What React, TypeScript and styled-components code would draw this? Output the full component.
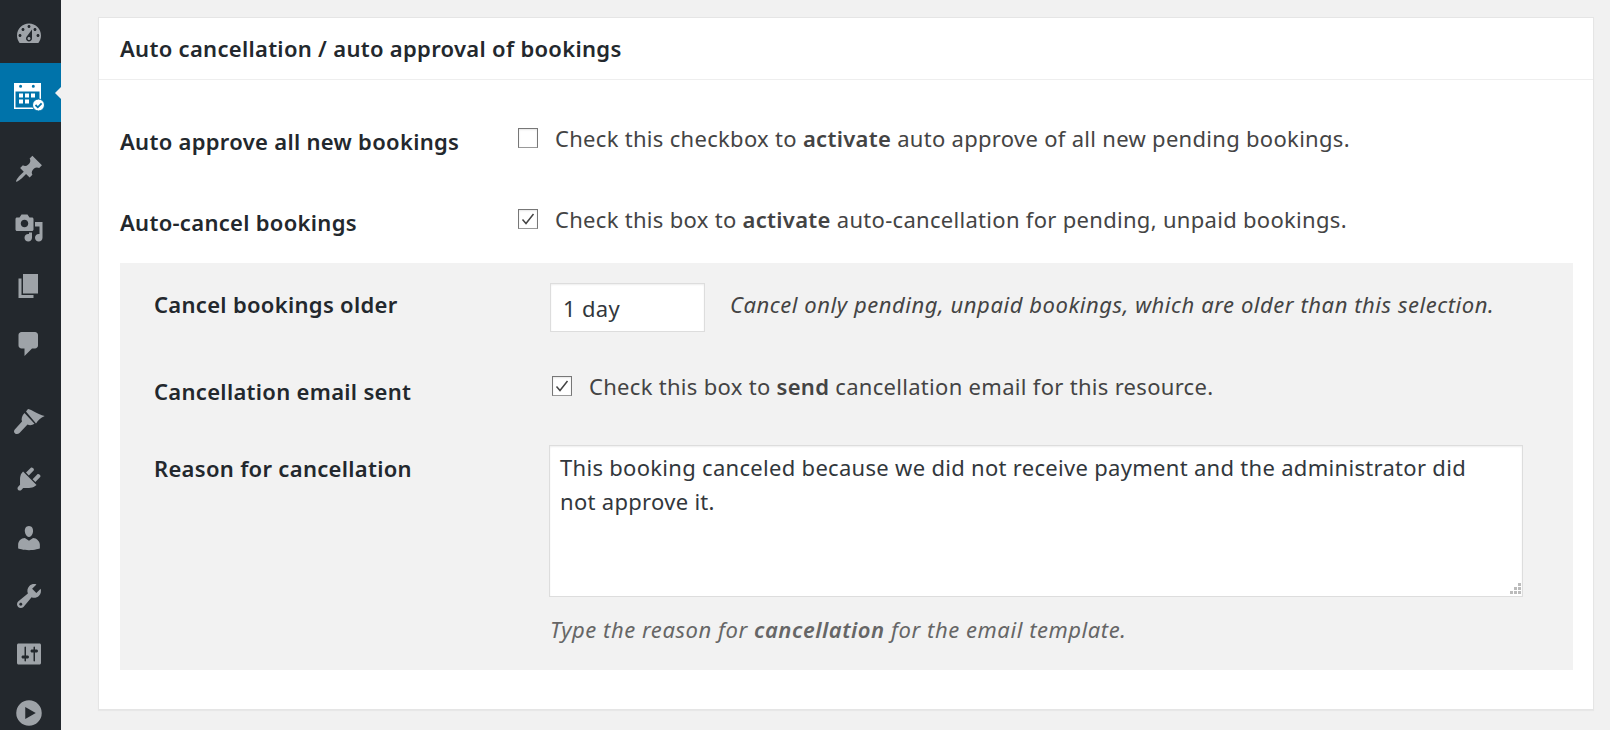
import React from "react";
import styled, { createGlobalStyle } from "styled-components";

const GlobalStyle = createGlobalStyle`
  html, body {
    margin: 0;
    padding: 0;
    height: 100%;
    overflow: hidden;
    background: #f1f1f1;
    font-family: "Noto Sans", "Open Sans", sans-serif;
    letter-spacing: 0.3px;
  }
`;

const Page = styled.div`
  display: flex;
  height: 730px;
  overflow: hidden;
`;

const Sidebar = styled.nav`
  width: 61px;
  flex: none;
  background: #23282d;
  padding-top: 4px;
  overflow: hidden;
`;

const MenuItem = styled.div<{ $active?: boolean; $gap?: boolean; $first?: boolean }>`
  position: relative;
  height: ${(p) => (p.$active || p.$first ? "59px" : "58.4px")};
  margin-top: ${(p) => (p.$gap ? "18px" : "0")};
  padding-right: 3px;
  box-sizing: border-box;
  display: flex;
  align-items: center;
  justify-content: center;
  color: ${(p) => (p.$active ? "#fff" : "#9ea3a8")};
  background: ${(p) => (p.$active ? "#0073aa" : "transparent")};

  svg {
    width: 30px;
    height: 30px;
    fill: currentColor;
    overflow: visible;
  }
`;

const ActiveArrow = styled.span`
  position: absolute;
  right: 0;
  top: 50%;
  margin-top: -6px;
  border: 6px solid transparent;
  border-left-width: 0;
  border-right-color: #f1f1f1;
`;

const Content = styled.main`
  flex: 1;
  padding: 17px 16px 0 37px;
`;

const Card = styled.section`
  height: 693px;
  box-sizing: border-box;
  background: #fff;
  border: 1px solid #e5e5e5;
  box-shadow: 0 1px 1px rgba(0, 0, 0, 0.04);
`;

const CardTitle = styled.h2`
  margin: 0;
  height: 62px;
  box-sizing: border-box;
  padding: 0 21px 2px;
  display: flex;
  align-items: center;
  border-bottom: 1px solid #eee;
  font-size: 22px;
  font-weight: 600;
  color: #23282d;
`;

const CardBody = styled.div`
  padding: 32px 20px 0 21px;
`;

const Row = styled.div<{ $height: number; $labelWidth: number }>`
  display: grid;
  grid-template-columns: ${(p) => p.$labelWidth}px 1fr;
  height: ${(p) => p.$height}px;
  align-items: start;
`;

const Label = styled.div<{ $top: number }>`
  font-size: 22px;
  line-height: 30px;
  font-weight: 600;
  color: #23282d;
  padding-top: ${(p) => p.$top}px;
`;

const CheckLine = styled.div<{ $top: number; $indent?: number }>`
  display: flex;
  align-items: center;
  gap: 17px;
  padding-top: ${(p) => p.$top}px;
  padding-left: ${(p) => p.$indent ?? 0}px;
  font-size: 22px;
  line-height: 30px;
  color: #444;

  b {
    font-weight: 600;
  }
`;

const CheckBox = styled.span`
  width: 20px;
  height: 20px;
  flex: none;
  box-sizing: border-box;
  border: 1px solid #777;
  border-bottom-color: #999;
  background: #fff;
  box-shadow: inset 0 1px 2px rgba(0, 0, 0, 0.1);
  display: flex;
  align-items: center;
  justify-content: center;

  svg {
    width: 14px;
    height: 14px;
  }
`;

const Panel = styled.div`
  height: 407px;
  box-sizing: border-box;
  background: #f2f2f2;
  padding: 20px 34px 0;
`;

const SelectLine = styled.div`
  display: flex;
  align-items: center;
  gap: 25px;
`;

const SelectBox = styled.div`
  width: 155px;
  height: 49px;
  box-sizing: border-box;
  background: #fff;
  border: 1px solid #ddd;
  box-shadow: inset 0 1px 2px rgba(0, 0, 0, 0.07);
  padding: 0 12px;
  display: flex;
  align-items: center;
  font-size: 22px;
  color: #32373c;
`;

const Hint = styled.div`
  font-size: 22px;
  font-style: italic;
  color: #444;
  line-height: 30px;
  letter-spacing: 0.55px;
  white-space: nowrap;

  b {
    font-weight: 600;
  }
`;

const SelectHint = styled(Hint)`
  margin-bottom: 8px;
`;

const AreaWrap = styled.div`
  position: relative;
  width: 974px;
  margin-left: -1px;
`;

const ReasonArea = styled.textarea`
  display: block;
  width: 100%;
  height: 152px;
  box-sizing: border-box;
  margin: 0;
  padding: 4px 40px 4px 10px;
  border: 1px solid #ddd;
  box-shadow: inset 0 1px 2px rgba(0, 0, 0, 0.07);
  outline: none;
  resize: none;
  font-family: inherit;
  font-size: 22px;
  letter-spacing: 0.3px;
  line-height: 34px;
  color: #32373c;
  background: #fff;
`;

const ResizeDots = styled.svg`
  position: absolute;
  right: 2px;
  bottom: 2px;
  width: 12px;
  height: 12px;
  fill: #bbb;
`;

const ReasonHint = styled(Hint)`
  margin-top: 17px;
  color: #666;
`;

const Tick = () => (
  <svg viewBox="0 0 14 14" fill="none" stroke="#444" strokeWidth="1.5">
    <path d="M1.5 7.5l3.5 4 7.5-9.5" />
  </svg>
);

const dashboardPath =
  "M3.76 16h12.48c1.1-1.37 1.76-3.11 1.76-5 0-4.42-3.58-8-8-8s-8 3.58-8 8c0 1.89.66 3.63 1.76 5zM10 4c.55 0 1 .45 1 1s-.45 1-1 1-1-.45-1-1 .45-1 1-1zM6 6c.55 0 1 .45 1 1s-.45 1-1 1-1-.45-1-1 .45-1 1-1zm8 0c.55 0 1 .45 1 1s-.45 1-1 1-1-.45-1-1 .45-1 1-1zm-5.37 5.55L12 7v6c0 1.1-.9 2-2 2s-2-.9-2-2c0-.57.24-1.08.63-1.45zM4 10c.55 0 1 .45 1 1s-.45 1-1 1-1-.45-1-1 .45-1 1-1zm12 0c.55 0 1 .45 1 1s-.45 1-1 1-1-.45-1-1 .45-1 1-1zm-5 3c0-.55-.45-1-1-1s-1 .45-1 1 .45 1 1 1 1-.45 1-1z";

const upperIcons = [
  "M10.44 3.02l1.82-1.82 6.36 6.35-1.83 1.82c-1.05-.68-2.48-.57-3.41.36l-.75.75c-.92.93-1.04 2.35-.35 3.41l-1.83 1.82-2.41-2.41-2.8 2.79c-.42.42-3.38 2.71-3.8 2.29s1.86-3.39 2.28-3.81l2.79-2.79L4.1 9.36l1.83-1.82c1.05.69 2.48.57 3.4-.36l.75-.75c.93-.92 1.05-2.35.36-3.41z",
  "M13 11V4c0-.55-.45-1-1-1h-1.67L9 1H5L3.67 3H2c-.55 0-1 .45-1 1v7c0 .55.45 1 1 1h10c.55 0 1-.45 1-1zM7 4.5c1.38 0 2.5 1.12 2.5 2.5S8.38 9.5 7 9.5 4.500 8.38 4.500 7 5.62 4.500 7 4.500zM14 6h5v10.500c0 1.38-1.12 2.5-2.5 2.5S14 17.88 14 16.500s1.12-2.5 2.5-2.5c.17 0 .34.02.5.05V9h-3V6zm-4 8.05V13h2v3.500c0 1.38-1.12 2.5-2.5 2.5S7 17.88 7 16.500 8.12 14 9.500 14c.17 0 .34.02.5.05z",
  "M6 15V2h10v13H6zm-1 1h8v2H3V5h2v11z",
  "M5 2h9c1.1 0 2 .9 2 2v7c0 1.1-.9 2-2 2h-2l-5 5v-5H5c-1.1 0-2-.9-2-2V4c0-1.1.9-2 2-2z",
];

const lowerIcons = [
  "M13.11 4.36L9.87 7.6 8 5.73l3.24-3.24c.35-.34 1.05-.2 1.56.32.52.51.66 1.21.31 1.55zm-8 1.77l.91-1.12 9.01 9.01-1.19.84c-.71.71-2.63 1.16-3.82 1.16H6.14L4.9 17.26c-.59.59-1.54.59-2.12 0-.59-.58-.59-1.53 0-2.12l1.24-1.24v-3.88c0-1.13.4-3.19 1.09-3.89zm7.26 3.97l3.24-3.24c.34-.35 1.04-.21 1.55.31.52.51.66 1.21.31 1.55l-3.24 3.25z",
  "M10 9.25c-2.27 0-2.73-3.44-2.73-3.44C7 4.02 7.82 2 9.97 2c2.16 0 2.98 2.02 2.71 3.81 0 0-.41 3.44-2.68 3.44zm0 2.57L12.72 10c2.39 0 4.52 2.33 4.52 4.53v2.49s-3.65 1.13-7.24 1.13c-3.65 0-7.24-1.13-7.24-1.13v-2.49c0-2.25 1.94-4.48 4.47-4.48z",
  "M16.68 9.77c-1.34 1.34-3.3 1.67-4.95.99l-5.41 6.52c-.99.99-2.59.99-3.58 0s-.99-2.59 0-3.57l6.52-5.42c-.68-1.65-.35-3.61.99-4.95 1.28-1.28 3.12-1.62 4.72-1.06l-2.89 2.89 2.82 2.82 2.86-2.87c.53 1.58.18 3.39-1.08 4.65zM3.81 16.21c.4.39 1.04.39 1.43 0 .4-.4.4-1.04 0-1.43-.39-.4-1.03-.4-1.43 0-.39.39-.39 1.03 0 1.43z",
  "M18 16V4c0-.55-.45-1-1-1H3c-.55 0-1 .45-1 1v12c0 .55.45 1 1 1h14c.55 0 1-.45 1-1zM8 11h1c.55 0 1 .45 1 1s-.45 1-1 1H8v1.500c0 .28-.22.5-.5.5s-.5-.22-.5-.5V13H6c-.55 0-1-.45-1-1s.45-1 1-1h1V5.500c0-.28.22-.5.5-.5s.5.22.5.5V11zm5-2h-1c-.55 0-1-.45-1-1s.45-1 1-1h1V5.500c0-.28.22-.5.5-.5s.5.22.5.5V7h1c.55 0 1 .45 1 1s-.45 1-1 1h-1v5.500c0 .28-.22.5-.5.5s-.5-.22-.5-.5V9z",
  "M10 1.500a8.500 8.500 0 1 0 0 17 8.500 8.500 0 0 0 0-17zM7.500 6l7 4-7 4V6z",
];

const CalendarIcon = () => (
  <svg viewBox="0 0 30 30">
    <path
      fillRule="evenodd"
      d="M0 5h27v26H0V5zm6.600 1.800a1.500 1.500 0 1 0 0 3 1.500 1.500 0 0 0 0-3zm12.700 0a1.500 1.500 0 1 0 0 3 1.500 1.500 0 0 0 0-3zM1.500 13.500v16h24v-16h-24z"
    />
    <path d="M5 15.500h4v4H5zM11 15.500h4v4h-4zM17 15.500h4v4h-4zM5 21.500h4v4H5zM11 21.500h4v4h-4z" />
    <circle cx="24.500" cy="27" r="6" stroke="#0073aa" strokeWidth="1" />
    <path d="M21.500 27l2.300 2.300 3.800-4" fill="none" stroke="#0073aa" strokeWidth="1.800" />
  </svg>
);

const BrushIcon = () => (
  <svg viewBox="14 406 30 30">
    <path d="M26 411.500L28 409C33 410 37 414 44.700 416 40.500 418 38 420 36 423.500z" />
    <path d="M24.500 413L34.500 423.800C32 425.500 29.500 425.500 27.500 424.500L19.500 433C17.500 435 14 434 14 431.500 14 430.500 14.500 430 15 429.200L22 421.500C21 419 22 415.500 24.500 413z" />
  </svg>
);

export default function App() {
  return (
    <Page>
      <GlobalStyle />
      <Sidebar>
        <MenuItem $first>
          <svg viewBox="0 0 20 20">
            <path d={dashboardPath} />
          </svg>
        </MenuItem>
        <MenuItem $active>
          <CalendarIcon />
          <ActiveArrow />
        </MenuItem>
        {upperIcons.map((d, i) => (
          <MenuItem key={d} $gap={i === 0}>
            <svg viewBox="0 0 20 20">
              <path d={d} fillRule="evenodd" />
            </svg>
          </MenuItem>
        ))}
        <MenuItem $gap>
          <BrushIcon />
        </MenuItem>
        {lowerIcons.map((d) => (
          <MenuItem key={d}>
            <svg viewBox="0 0 20 20">
              <path d={d} fillRule="evenodd" />
            </svg>
          </MenuItem>
        ))}
      </Sidebar>
      <Content>
        <Card>
          <CardTitle>Auto cancellation / auto approval of bookings</CardTitle>
          <CardBody>
            <Row $height={81} $labelWidth={398}>
              <Label $top={14}>Auto approve all new bookings</Label>
              <CheckLine $top={11}>
                <CheckBox />
                <span>
                  Check this checkbox to <b>activate</b> auto approve of all new pending bookings.
                </span>
              </CheckLine>
            </Row>
            <Row $height={70} $labelWidth={398}>
              <Label $top={14}>Auto-cancel bookings</Label>
              <CheckLine $top={11}>
                <CheckBox>
                  <Tick />
                </CheckBox>
                <span>
                  Check this box to <b>activate</b> auto-cancellation for pending, unpaid bookings.
                </span>
              </CheckLine>
            </Row>
            <Panel>
              <Row $height={87} $labelWidth={396}>
                <Label $top={6}>Cancel bookings older</Label>
                <SelectLine>
                  <SelectBox>1 day</SelectBox>
                  <SelectHint>Cancel only pending, unpaid bookings, which are older than this selection.</SelectHint>
                </SelectLine>
              </Row>
              <Row $height={75} $labelWidth={396}>
                <Label $top={6}>Cancellation email sent</Label>
                <CheckLine $top={1} $indent={2}>
                  <CheckBox>
                    <Tick />
                  </CheckBox>
                  <span>
                    Check this box to <b>send</b> cancellation email for this resource.
                  </span>
                </CheckLine>
              </Row>
              <Row $height={220} $labelWidth={396}>
                <Label $top={8}>Reason for cancellation</Label>
                <div>
                  <AreaWrap>
                    <ReasonArea
                      readOnly
                      defaultValue="This booking canceled because we did not receive payment and the administrator did not approve it."
                    />
                    <ResizeDots viewBox="0 0 12 12">
                      <rect x="9" y="0" width="3" height="3" />
                      <rect x="5" y="4" width="3" height="3" />
                      <rect x="9" y="4" width="3" height="3" />
                      <rect x="1" y="8" width="3" height="3" />
                      <rect x="5" y="8" width="3" height="3" />
                      <rect x="9" y="8" width="3" height="3" />
                    </ResizeDots>
                  </AreaWrap>
                  <ReasonHint>
                    Type the reason for <b>cancellation</b> for the email template.
                  </ReasonHint>
                </div>
              </Row>
            </Panel>
          </CardBody>
        </Card>
      </Content>
    </Page>
  );
}
